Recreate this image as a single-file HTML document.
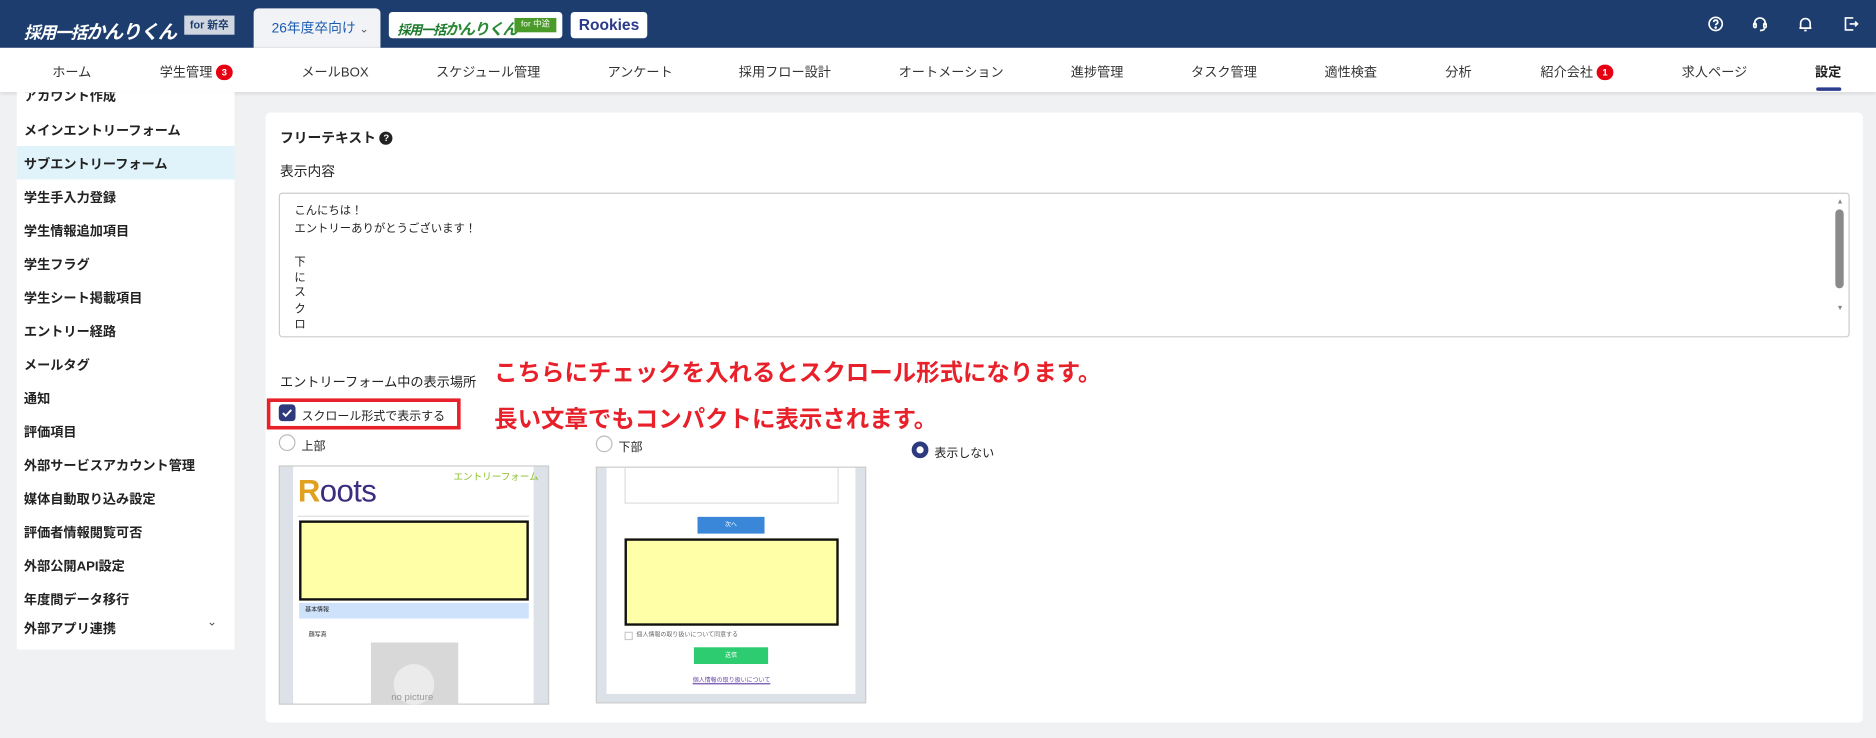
<!DOCTYPE html>
<html><head><meta charset="utf-8"><style>
*{box-sizing:border-box;margin:0;padding:0}
html,body{width:1876px;height:738px;overflow:hidden;background:#f0f1f3}
body{font-family:"Liberation Sans","Noto Sans CJK JP",sans-serif;color:#222}
#w{position:absolute;left:0;top:0;width:1568px;height:617px;transform:scale(1.19643);transform-origin:0 0;background:#f0f1f3}
.a{position:absolute;white-space:nowrap}
.hdr{left:0;top:0;width:1568px;height:40px;background:#1c3d6e}
.nav{left:0;top:40px;width:1568px;height:37px;background:#fff;box-shadow:0 1px 3px rgba(0,0,0,.12)}
.nv{top:52px;font-size:11px;color:#333;transform:translateX(-50%)}
.badge{display:inline-block;width:14px;height:13px;border-radius:7px;background:#e60012;color:#fff;font-size:8px;font-weight:bold;text-align:center;line-height:13px;vertical-align:1px;margin-left:3px}
.side{left:14px;top:77px;width:182px;height:466px;background:#fff}
.si{left:20px;font-size:11px;font-weight:bold;color:#222}
.card{left:222px;top:94px;width:1335px;height:510px;background:#fff;border-radius:4px}
.ta{left:233px;top:161px;width:1313px;height:121px;border:1px solid #ccc;border-radius:3px;background:#fff}
.tl{left:246px;font-size:9.5px;color:#222}
.red{color:#e8202a;font-size:19.6px;font-weight:bold;left:413px}
.radio{width:14px;height:14px;border:1px solid #bbb;border-radius:50%;background:#fff}
.img{border:1px solid #ccc;background:#dde1e8}
.ic{top:13px;width:14px;height:14px}
</style></head><body><div id="w">
<div class="a hdr"></div>
<div class="a" style="left:20px;top:13px;font-size:14px;font-weight:bold;font-style:italic;color:#fff;letter-spacing:-1px">採用一括<span style="font-size:16px">かんりくん</span></div>
<div class="a" style="left:154px;top:13px;width:42px;height:16px;background:#d0d6e0;color:#1c3d6e;font-size:9px;font-weight:bold;line-height:16px;text-align:center">for 新卒</div>
<div class="a" style="left:212px;top:7px;width:106px;height:33px;background:#f2f3f6;border-radius:4px 4px 0 0;color:#1c5bb0;font-size:11.5px;line-height:34px;padding-left:15px">26年度卒向け <span style="font-size:9px;color:#555">⌄</span></div>
<div class="a" style="left:325px;top:10px;width:145px;height:22px;background:#fff;border-radius:3px"></div>
<div class="a" style="left:332px;top:14px;font-size:11px;font-weight:bold;font-style:italic;color:#1a7a2a;letter-spacing:-1px">採用一括<span style="font-size:13px;color:#2a8a34">かんりくん</span></div>
<div class="a" style="left:430px;top:15px;width:35px;height:12px;background:#4a9a2a;color:#fff;font-size:7px;line-height:12px;text-align:center">for 中途</div>
<div class="a" style="left:477px;top:10px;width:64px;height:22px;background:#fff;border-radius:3px;color:#2a3a8a;font-size:13px;font-weight:bold;text-align:center;line-height:22px">Rookies</div>
<svg class="a ic" style="left:1427px" viewBox="0 0 14 14" fill="none" stroke="#fff" stroke-width="1.4"><circle cx="7" cy="7" r="5.5"/><path d="M5.3 5.5a1.7 1.7 0 1 1 2.3 1.6c-.5.2-.6.5-.6 1"/><circle cx="7" cy="10" r=".4" fill="#fff"/></svg>
<svg class="a ic" style="left:1464px" viewBox="0 0 14 14" fill="none" stroke="#fff" stroke-width="1.4"><path d="M2.5 8V6.5a4.5 4.5 0 0 1 9 0V8"/><rect x="1.8" y="6.5" width="2" height="3.5" rx="1"/><rect x="10.2" y="6.5" width="2" height="3.5" rx="1"/><path d="M11 10c0 2-2 2.5-4 2.5"/></svg>
<svg class="a ic" style="left:1502px" viewBox="0 0 14 14" fill="none" stroke="#fff" stroke-width="1.4"><path d="M3 10.5V6.5a4 4 0 0 1 8 0v4zM2 10.5h10M6 12.5h2"/></svg>
<svg class="a ic" style="left:1540px" viewBox="0 0 14 14" fill="none" stroke="#fff" stroke-width="1.4"><path d="M9 2H2.5v10H9M6 7h6.5M10.5 5l2 2-2 2"/></svg>

<div class="a nav"></div>
<div class="a nv" style="left:60px">ホーム</div>
<div class="a nv" style="left:164px">学生管理<span class="badge">3</span></div>
<div class="a nv" style="left:280px">メールBOX</div>
<div class="a nv" style="left:408px">スケジュール管理</div>
<div class="a nv" style="left:535px">アンケート</div>
<div class="a nv" style="left:656px">採用フロー設計</div>
<div class="a nv" style="left:795px">オートメーション</div>
<div class="a nv" style="left:917px">進捗管理</div>
<div class="a nv" style="left:1023px">タスク管理</div>
<div class="a nv" style="left:1129px">適性検査</div>
<div class="a nv" style="left:1219px">分析</div>
<div class="a nv" style="left:1318px">紹介会社<span class="badge">1</span></div>
<div class="a nv" style="left:1433px">求人ページ</div>
<div class="a nv" style="left:1528px;font-weight:bold;color:#222">設定</div>
<div class="a" style="left:1518px;top:73px;width:21px;height:3px;border-radius:2px;background:#2e3e8e"></div>

<div class="a side"></div>
<div class="a" style="left:14px;top:122px;width:182px;height:28px;background:#e1f3fa"></div>
<div class="a si" style="top:72px;clip-path:inset(5px 0 0 0)">アカウント作成</div>
<div class="a si" style="top:101px">メインエントリーフォーム</div>
<div class="a si" style="top:129px">サブエントリーフォーム</div>
<div class="a si" style="top:157px">学生手入力登録</div>
<div class="a si" style="top:185px">学生情報追加項目</div>
<div class="a si" style="top:213px">学生フラグ</div>
<div class="a si" style="top:241px">学生シート掲載項目</div>
<div class="a si" style="top:269px">エントリー経路</div>
<div class="a si" style="top:297px">メールタグ</div>
<div class="a si" style="top:325px">通知</div>
<div class="a si" style="top:353px">評価項目</div>
<div class="a si" style="top:381px">外部サービスアカウント管理</div>
<div class="a si" style="top:409px">媒体自動取り込み設定</div>
<div class="a si" style="top:437px">評価者情報閲覧可否</div>
<div class="a si" style="top:465px">外部公開API設定</div>
<div class="a si" style="top:493px">年度間データ移行</div>
<div class="a si" style="top:517px">外部アプリ連携</div>
<div class="a" style="left:173px;top:515px;font-size:10px;color:#555">⌄</div>

<div class="a card"></div>
<div class="a" style="left:234px;top:107px;font-size:11.5px;font-weight:bold">フリーテキスト <span style="display:inline-block;width:11px;height:11px;border-radius:50%;background:#222;color:#fff;font-size:8px;text-align:center;line-height:11px;vertical-align:1px">?</span></div>
<div class="a" style="left:234px;top:135px;font-size:11.5px">表示内容</div>
<div class="a ta"></div>
<div class="a" style="left:1534px;top:175px;width:7px;height:66px;border-radius:4px;background:#8a8a8a"></div>
<div class="a" style="left:1535px;top:166px;font-size:6px;color:#888">▲</div>
<div class="a" style="left:1535px;top:255px;font-size:6px;color:#888">▼</div>
<div class="a tl" style="top:168px">こんにちは！</div>
<div class="a tl" style="top:183px">エントリーありがとうございます！</div>
<div class="a tl" style="top:211px">下</div>
<div class="a tl" style="top:224px">に</div>
<div class="a tl" style="top:236px">ス</div>
<div class="a tl" style="top:250px">ク</div>
<div class="a tl" style="top:263px">ロ</div>

<div class="a" style="left:234px;top:311px;font-size:11px">エントリーフォーム中の表示場所</div>
<div class="a red" style="top:295px">こちらにチェックを入れるとスクロール形式になります。</div>
<div class="a red" style="top:334px">長い文章でもコンパクトに表示されます。</div>
<div class="a" style="left:223px;top:333px;width:162px;height:26px;border:3px solid #e8202a"></div>
<div class="a" style="left:233px;top:338px;width:14px;height:14px;border-radius:3px;background:#2e3a7e"></div>
<svg class="a" style="left:233px;top:338px" width="14" height="14" viewBox="0 0 14 14"><path d="M3.5 7.2l2.3 2.4 4.7-5" stroke="#fff" stroke-width="1.6" fill="none"/></svg>
<div class="a" style="left:252px;top:339px;font-size:10px">スクロール形式で表示する</div>
<div class="a radio" style="left:233px;top:363px"></div>
<div class="a" style="left:252px;top:364px;font-size:10px">上部</div>
<div class="a radio" style="left:498px;top:364px"></div>
<div class="a" style="left:517px;top:365px;font-size:10px">下部</div>
<div class="a radio" style="left:762px;top:369px;border:4px solid #2e3a7e"></div>
<div class="a" style="left:781px;top:370px;font-size:10px">表示しない</div>

<div class="a img" style="left:233px;top:389px;width:226px;height:200px"></div>
<div class="a" style="left:245px;top:390px;width:201px;height:198px;background:#fff"></div>
<div class="a" style="left:249px;top:395px;font-size:26px;color:#3a2e7e;letter-spacing:-0.5px"><span style="color:#e0a020;font-weight:bold">R</span>oots</div>
<div class="a" style="left:379px;top:393px;font-size:8px;color:#8ac028">エントリーフォーム</div>
<div class="a" style="left:249px;top:431px;width:193px;height:1px;background:#ddd"></div>
<div class="a" style="left:250px;top:435px;width:192px;height:67px;background:#ffffa8;border:2px solid #111"></div>
<div class="a" style="left:250px;top:504px;width:192px;height:13px;background:#cfe2fb;font-size:5px;line-height:13px;padding-left:5px">基本情報</div>
<div class="a" style="left:258px;top:527px;font-size:5px">顔写真</div>
<div class="a" style="left:310px;top:537px;width:73px;height:52px;background:#d8d8d8"></div>
<div class="a" style="left:329px;top:555px;width:34px;height:34px;border-radius:50%;background:#ebebeb"></div>
<div class="a" style="left:327px;top:578px;font-size:8px;color:#999">no picture</div>

<div class="a img" style="left:498px;top:390px;width:226px;height:198px"></div>
<div class="a" style="left:507px;top:391px;width:208px;height:189px;background:#fff"></div>
<div class="a" style="left:522px;top:391px;width:179px;height:30px;border:1px solid #ddd;border-top:none"></div>
<div class="a" style="left:583px;top:432px;width:56px;height:14px;background:#3a86d8;color:#fff;font-size:5px;text-align:center;line-height:14px">次へ</div>
<div class="a" style="left:522px;top:450px;width:179px;height:73px;background:#ffffa8;border:2px solid #111"></div>
<div class="a" style="left:522px;top:528px;width:7px;height:7px;border:1px solid #ccc"></div>
<div class="a" style="left:532px;top:527px;font-size:5px;color:#666">個人情報の取り扱いについて同意する</div>
<div class="a" style="left:580px;top:541px;width:62px;height:14px;background:#2ecc71;color:#fff;font-size:5px;text-align:center;line-height:14px">送信</div>
<div class="a" style="left:579px;top:565px;font-size:5px;color:#6a4aa8;text-decoration:underline">個人情報の取り扱いについて</div>
</div></body></html>
